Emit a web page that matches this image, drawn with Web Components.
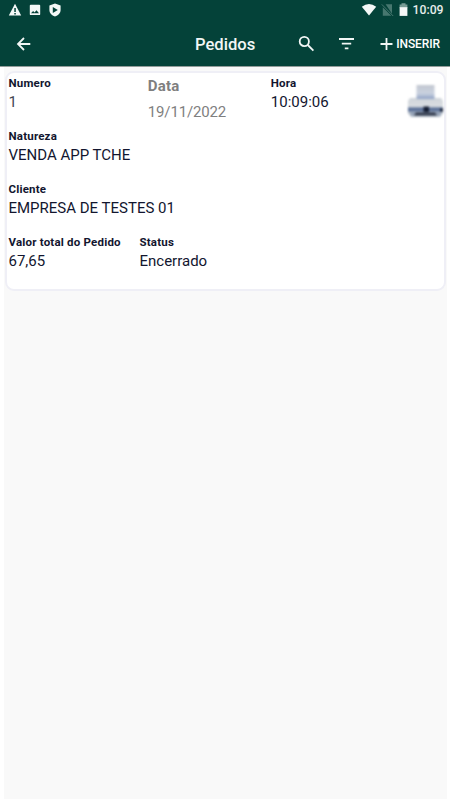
<!DOCTYPE html>
<html lang="pt-BR">
<head>
<meta charset="utf-8">
<title>Pedidos</title>
<style>
  html, body { height: 100%; }
  body { margin: 0; background: #fff; font-family: Roboto, "Liberation Sans", sans-serif; color: #12162f; overflow: hidden; }
</style>
</head>
<body>
<orders-screen></orders-screen>
<script>
class StatusBar extends HTMLElement {
  constructor() {
    super();
    this.attachShadow({ mode: "open" }).innerHTML = `
      <style>
        :host { display: flex; box-sizing: border-box; height: 20px; padding: 0 6.500px 0 8px; align-items: center; justify-content: space-between; color: #fff; }
        div { display: flex; align-items: center; }
        svg { display: block; fill: #f4f8f7; }
        .left { gap: 7px; }
        .right { gap: 4px; }
        time { font: 500 12.2px/20px Roboto, sans-serif; color: #e6edeb; margin-left: 0; }
      </style>
      <div class="left">
        <svg width="14" height="14" viewBox="0 0 14 14"><path d="M7 .8 13.200 12.400H.8z"/><path fill="#044239" d="M6.300 5h1.500v4H6.300zM6.300 10h1.500v1.500H6.300z"/></svg>
        <svg width="12" height="14" viewBox="0 0 12 14"><path fill-rule="evenodd" d="M1.700 1.700h8.600q.9 0 .9.900v8.600q0 .9-.9.900H1.700q-.9 0-.9-.9V2.600q0-.9.9-.9zM2 10.300h8L7.500 7.300 5.500 9.600 4.100 8z"/></svg>
        <svg width="14" height="14" viewBox="0 0 14 14"><path fill-rule="evenodd" d="M7 .5 12.600 2.500v4.600c0 3-2.300 5.500-5.600 6.500-3.300-1-5.600-3.500-5.600-6.500V2.500zM4.800 4v6l5-3z"/></svg>
      </div>
      <div class="right">
        <svg width="16" height="14" viewBox="0 0 16 14"><path d="M.8 3.700Q8-1.500 15.200 3.700L8 12.400z"/></svg>
        <svg width="13" height="14" viewBox="0 0 13 14"><path fill="#47776f" d="M4.600 1.200h6.400v9.500zM1.800 4.200l8.500 8.600H1.800z"/><path stroke="#47776f" d="m.8 1.400 11.400 11.600"/></svg>
        <svg width="11" height="14" viewBox="0 0 11 14"><path fill="#779c95" d="M3.500.3h4v1.200h1.900V5H1.600V1.500h1.900z"/><path d="M1.600 4.200h7.800v8.700H1.600z"/></svg>
        <time>10:09</time>
      </div>`;
  }
}

class AppBar extends HTMLElement {
  constructor() {
    super();
    this.attachShadow({ mode: "open" }).innerHTML = `
      <style>
        :host { display: grid; grid-template-columns: 195px 1fr auto; box-sizing: border-box; height: 46px; padding-right: 10px; align-items: center; color: #fff; }
        svg { display: block; fill: none; stroke: #f2f6f5; stroke-width: 1.8; }
        .back { margin-left: 15.500px; }
        h1 { margin: 0; font: 500 16.6px/46px Roboto, sans-serif; color: #f2f6f5; padding-top: 2px; }
        .actions { display: flex; align-items: center; }
        .filter { margin-left: 23px; }
        .plus { margin-left: 25px; }
        .insert { font: 500 12px/46px Roboto, sans-serif; letter-spacing: -.1px; margin-left: 3.500px; }
      </style>
      <svg class="back" width="16" height="16" viewBox="0 0 16 16"><path d="M14.300 8H2M8 2 2 8l6 6"/></svg>
      <h1><slot></slot></h1>
      <div class="actions">
        <svg width="17" height="17" viewBox="0 0 17 17"><circle cx="6.300" cy="5.500" r="4.600"/><path d="m9.800 9 5.600 5.600"/></svg>
        <svg class="filter" width="17" height="14" viewBox="0 0 17 14"><path d="M1 2h15M3.800 6.700h9.400M6.800 11.300h3.600"/></svg>
        <svg class="plus" width="13" height="14" viewBox="0 0 13 14"><path d="M6.500 1v12M.5 7h12"/></svg>
        <span class="insert">INSERIR</span>
      </div>`;
  }
}

class OrderField extends HTMLElement {
  constructor() {
    super();
    this.attachShadow({ mode: "open" }).innerHTML = `
      <style>
        :host { display: block; white-space: nowrap; }
        .label { font-size: 11.5px; font-weight: 700; line-height: 16px; letter-spacing: .2px; }
        .value { font-size: 15px; line-height: 22.5px; }
        :host([muted]) { color: #7f7f7f; }
        :host([muted]) .label { font-size: 15px; line-height: 22px; }
        :host([muted]) .value { line-height: 22px; margin-top: 4.500px; letter-spacing: -.15px; }
      </style>
      <div class="label"></div>
      <div class="value"><slot></slot></div>`;
  }
  connectedCallback() {
    this.shadowRoot.querySelector(".label").textContent = this.getAttribute("label");
  }
}

class PrintButton extends HTMLElement {
  constructor() {
    super();
    this.attachShadow({ mode: "open" }).innerHTML = `
      <style>:host { display: block; } svg { display: block; overflow: visible; filter: blur(.8px); }</style>
      <svg width="37" height="34" viewBox="0 0 37 34">
        <defs>
          <linearGradient id="paper" x2="0" y2="1"><stop stop-color="#c3c8d1"/><stop offset=".6" stop-color="#c9d1df"/><stop offset="1" stop-color="#8ea1c5"/></linearGradient>
          <linearGradient id="body" x2="0" y2="1"><stop stop-color="#cfd4da"/><stop offset=".4" stop-color="#d9dde1"/><stop offset=".65" stop-color="#aeb8c5"/></linearGradient>
        </defs>
        <path fill="url(#body)" d="M3 13h31l2 3v12l-3 4H4l-3-4V16z"/>
        <path fill="url(#paper)" d="M9.500 0h18v14h-18z"/>
        <path fill="#5c7198" d="M1 22.500h35v4H1z"/>
        <path fill="#92a0b5" d="M4 26.500h29V30H4z"/>
        <path fill="#30384a" d="M9 27.500h19l2 3H7z"/>
        <path fill="#141d32" d="M16.500 21.500h5.500v5.500h-5.500zM33 23.500h3v3h-3z"/>
      </svg>`;
  }
}

class OrderCard extends HTMLElement {
  constructor() {
    super();
    this.attachShadow({ mode: "open" }).innerHTML = `
      <style>
        :host { display: block; box-sizing: border-box; height: 220px; padding: 1.500px 0 0 1.500px; background: #fff; border: 2px solid #efeff6; border-radius: 9px; }
        .row { display: grid; height: 53.3px; align-items: start; }
        .top { grid-template-columns: 139.3px 123px 1fr auto; }
        .bottom { grid-template-columns: 131px 1fr; }
        print-button { margin: 10px .5px 0 0; }
        .number { color: #434652; }
      </style>
      <div class="row top">
        <order-field label="Numero"><span class="number">1</span></order-field>
        <order-field label="Data" muted>19/11/2022</order-field>
        <order-field label="Hora">10:09:06</order-field>
        <print-button></print-button>
      </div>
      <div class="row"><order-field label="Natureza">VENDA APP TCHE</order-field></div>
      <div class="row"><order-field label="Cliente">EMPRESA DE TESTES 01</order-field></div>
      <div class="row bottom">
        <order-field label="Valor total do Pedido">67,65</order-field>
        <order-field label="Status">Encerrado</order-field>
      </div>`;
  }
}

class OrdersScreen extends HTMLElement {
  constructor() {
    super();
    this.attachShadow({ mode: "open" }).innerHTML = `
      <style>
        :host { display: flex; flex-direction: column; height: 100vh; }
        header { height: 66px; background: #044239; border-bottom: 1px solid #929c9a; }
        main { flex: 1; margin: 0 3px 1px 4px; padding: 4px 1px 0; background: #f9f9f9; }
      </style>
      <header>
        <status-bar></status-bar>
        <app-bar>Pedidos</app-bar>
      </header>
      <main><order-card></order-card></main>`;
  }
}

customElements.define("status-bar", StatusBar);
customElements.define("app-bar", AppBar);
customElements.define("order-field", OrderField);
customElements.define("print-button", PrintButton);
customElements.define("order-card", OrderCard);
customElements.define("orders-screen", OrdersScreen);
</script>
</body>
</html>
